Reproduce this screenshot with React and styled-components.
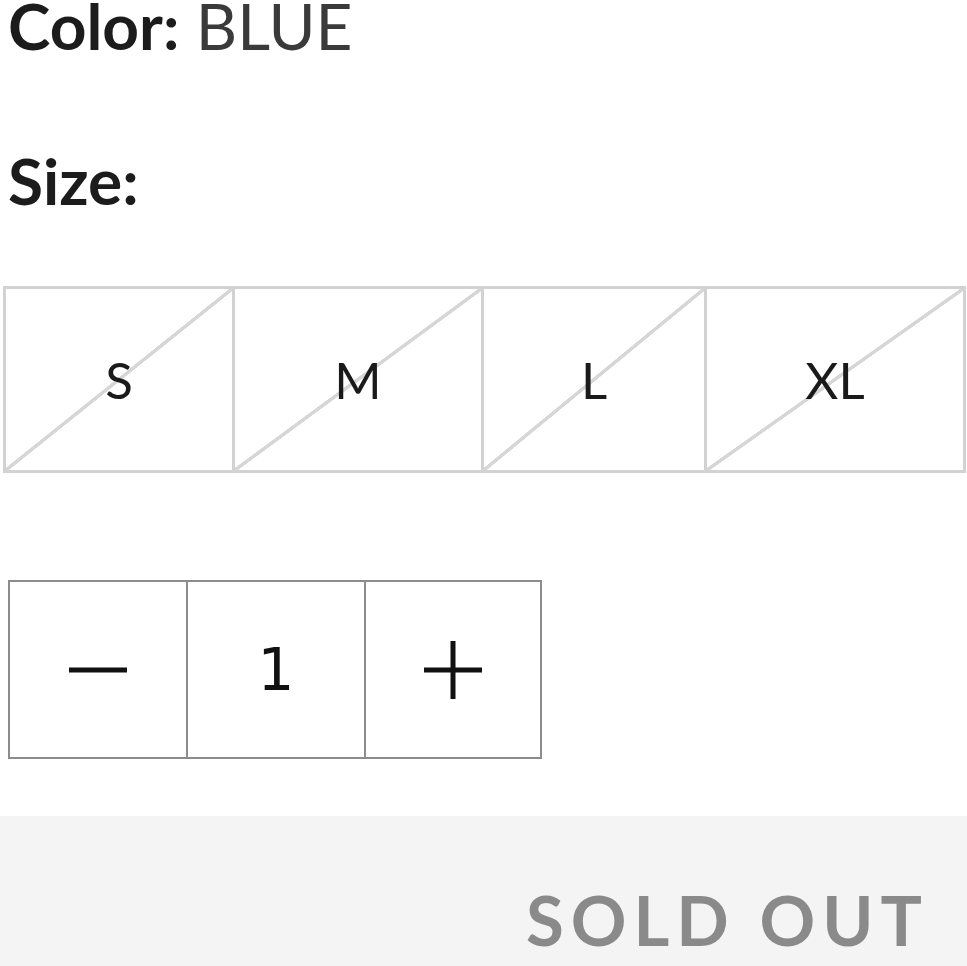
import React from "react";
import styled, { createGlobalStyle } from "styled-components";

const GlobalStyle = createGlobalStyle`
  body {
    margin: 0;
    background: #fff;
    font-family: Lato, "Noto Sans", sans-serif;
    color: #1c1c1c;
    overflow: hidden;
  }
`;

const sizes = [
  { label: "S", width: 232 },
  { label: "M", width: 252 },
  { label: "L", width: 226 },
  { label: "XL", width: 262 },
];

const App = () => {
  return (
    <Page>
      <GlobalStyle />
      <OptionLabel>
        <b>Color:</b> <span>BLUE</span>
      </OptionLabel>
      <OptionLabel $gap>
        <b>Size:</b>
      </OptionLabel>
      <SizeRow>
        {sizes.map((s) => (
          <SizeBox key={s.label} $w={s.width}>
            {s.label}
          </SizeBox>
        ))}
      </SizeRow>
      <Quantity>
        <QtyCell aria-label="decrease">
          <svg width="58" height="6" viewBox="0 0 58 6">
            <rect x="0" y="0.5" width="58" height="5" fill="#111" />
          </svg>
        </QtyCell>
        <QtyCell as="div">1</QtyCell>
        <QtyCell aria-label="increase">
          <svg width="58" height="58" viewBox="0 0 58 58">
            <rect x="0" y="26.5" width="58" height="5" fill="#111" />
            <rect x="26.5" y="0" width="5" height="58" fill="#111" />
          </svg>
        </QtyCell>
      </Quantity>
      <SoldOut disabled>SOLD OUT</SoldOut>
    </Page>
  );
};

const Page = styled.div`
  width: 967px;
  height: 966px;
  display: flex;
  flex-direction: column;
`;

const OptionLabel = styled.div`
  padding-left: 8px;
  font-size: 64px;
  line-height: 0.8;
  margin-top: ${(p) => (p.$gap ? "104px" : "0")};
  white-space: nowrap;
  b {
    font-weight: 700;
    color: #1c1c1c;
  }
  span {
    font-weight: 400;
    color: #3a3a3a;
  }
`;

const SizeRow = styled.div`
  display: flex;
  margin: 80px 0 0 3px;
  height: 187px;
`;

const SizeBox = styled.button`
  flex: none;
  width: ${(p) => p.$w}px;
  display: flex;
  align-items: center;
  justify-content: center;
  padding: 0;
  border: 3px solid #d2d2d2;
  margin-left: -3px;
  &:first-child {
    margin-left: 0;
  }
  background: linear-gradient(
    to bottom right,
    transparent calc(50% - 2px),
    #d6d6d6 calc(50% - 1.5px),
    #d6d6d6 calc(50% + 1.5px),
    transparent calc(50% + 2px)
  );
  font-family: Lato, "Noto Sans", sans-serif;
  font-size: 51px;
  font-weight: 400;
  color: #1a1a1a;
  cursor: pointer;
`;

const Quantity = styled.div`
  display: flex;
  margin: 107px 0 0 8px;
  width: fit-content;
  border: 2px solid #8c8c8c;
`;

const QtyCell = styled.button`
  width: 176px;
  height: 175px;
  display: flex;
  align-items: center;
  justify-content: center;
  border: none;
  border-left: 2px solid #8c8c8c;
  &:first-child {
    border-left: none;
  }
  background: #fff;
  padding: 0;
  font-family: "DejaVu Sans", sans-serif;
  font-size: 58px;
  color: #111;
`;

const SoldOut = styled.button`
  margin-top: 57px;
  flex: 1;
  border: none;
  background: #f4f4f4;
  display: flex;
  align-items: flex-end;
  justify-content: flex-end;
  padding: 0 38px 5px 0;
  font-family: Lato, "Noto Sans", sans-serif;
  font-weight: 700;
  font-size: 69px;
  letter-spacing: 7px;
  color: #8a8a8a;
`;

export default App;
